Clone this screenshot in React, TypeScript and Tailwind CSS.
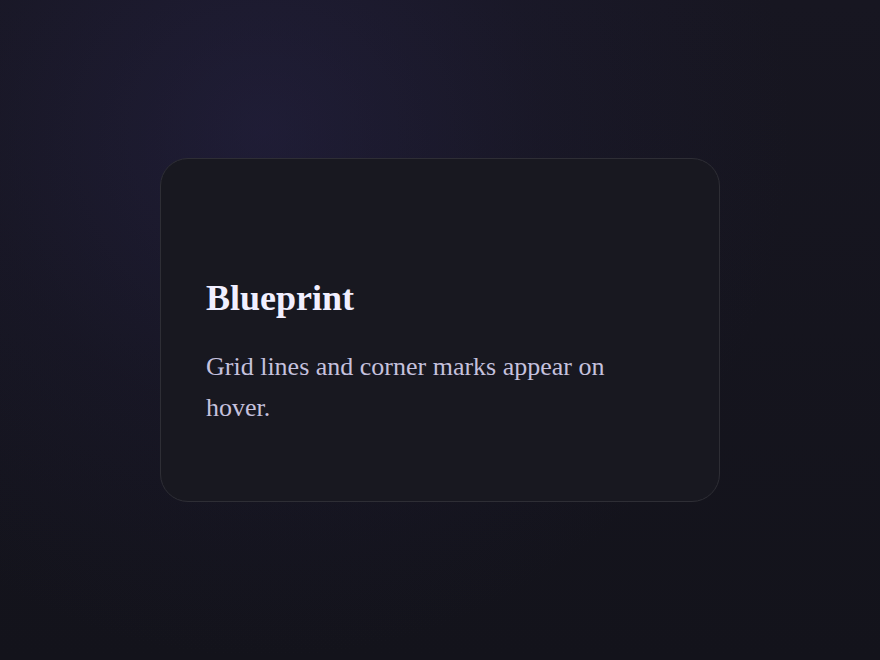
export default function App() {
  return (
    <div
      className="min-h-[660px] w-full flex items-start justify-center pt-[158px] bg-[#14141c] bg-[radial-gradient(circle_at_30%_20%,rgba(50,44,100,0.32)_0%,rgba(40,36,80,0.14)_35%,transparent_65%),linear-gradient(180deg,#171621_0%,#13131b_100%)]"
      style={{ fontFamily: '"Liberation Serif", "Times New Roman", serif' }}
    >
      <div className="w-[560px] h-[344px] rounded-[28px] border border-[#2e2e35] bg-[#181820] flex flex-col justify-end px-[45px] pb-[72px]">
        <h2 className="text-[36px] leading-[1.2] font-bold text-[#f1efff]">Blueprint</h2>
        <p className="mt-[26px] max-w-[440px] text-[26px] leading-[1.6] text-[#c5c1de]">
          Grid lines and corner marks appear on hover.
        </p>
      </div>
    </div>
  );
}
